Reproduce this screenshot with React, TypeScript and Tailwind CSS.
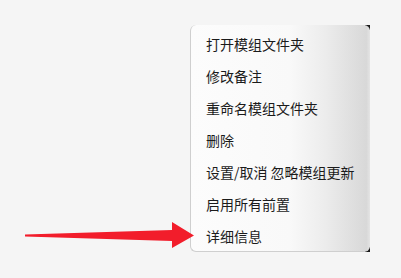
const items = [
  "打开模组文件夹",
  "修改备注",
  "重命名模组文件夹",
  "删除",
  "设置/取消 忽略模组更新",
  "启用所有前置",
  "详细信息",
];

export default function App() {
  return (
    <div
      className="relative w-[401px] h-[278px] overflow-hidden bg-[#f5f5f5]"
      style={{ fontFamily: '"Noto Sans CJK SC", "Noto Sans", sans-serif' }}
    >
      <div className="relative ml-[190px] pt-[25px] w-[180px]">
        {/* dark corners behind the rounded menu, as in the capture */}
        <div className="absolute right-0 top-[25px] w-[5px] h-[5px] bg-[#1a1a1a]" />
        <div className="absolute right-0 bottom-0 w-[5px] h-[5px] bg-[#1a1a1a]" />
        <div className="relative h-[227px] rounded-[6px] border-l border-b border-[#cfcfcf] bg-[linear-gradient(to_right,#fcfcfc_0%,#f9f9f9_55%,#ececec_75%,#d8d8d8_98%,#e4e4e4_100%)] pt-[3px]">
          {items.map((t) => (
            <div key={t} className="h-[32px] flex items-center pl-[15px] text-[14px] leading-none text-[#1b1b1b] whitespace-pre">
              {t}
            </div>
          ))}
        </div>
      </div>
      <svg className="absolute left-0 top-0" width="401" height="278" viewBox="0 0 401 278">
        <polygon
          points="25,234.5 172,230 172,222 194,235.5 172,248 172,241 25,236.5"
          fill="#f21d2b"
        />
      </svg>
    </div>
  );
}
